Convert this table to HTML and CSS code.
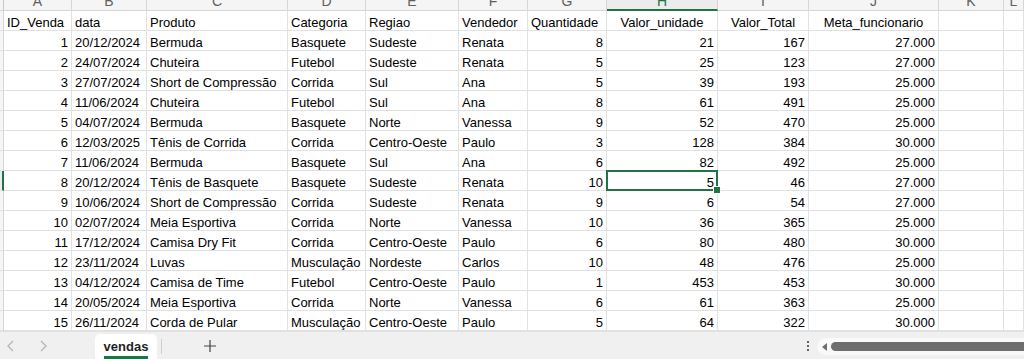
FILE: index.html
```html
<!DOCTYPE html>
<html>
<head>
<meta charset="utf-8">
<link rel="stylesheet" href="styles.css">
</head>
<body>
<div class="app">
  <div class="sheet">
    <div class="hd corner"></div>
    <div class="hd"><span>A</span></div>
    <div class="hd"><span>B</span></div>
    <div class="hd"><span>C</span></div>
    <div class="hd"><span>D</span></div>
    <div class="hd"><span>E</span></div>
    <div class="hd"><span>F</span></div>
    <div class="hd"><span>G</span></div>
    <div class="hd hd-sel"><span>H</span></div>
    <div class="hd"><span>I</span></div>
    <div class="hd"><span>J</span></div>
    <div class="hd"><span>K</span></div>
    <div class="hd"><span>L</span></div>

    <div class="rh"></div>
    <div class="c">ID_Venda</div><div class="c">data</div><div class="c">Produto</div><div class="c">Categoria</div><div class="c">Regiao</div><div class="c">Vendedor</div><div class="c">Quantidade</div><div class="c ctr">Valor_unidade</div><div class="c ctr">Valor_Total</div><div class="c ctr">Meta_funcionario</div><div class="c"></div><div class="c"></div>

    <div class="rh"></div>
    <div class="c n">1</div><div class="c">20/12/2024</div><div class="c">Bermuda</div><div class="c">Basquete</div><div class="c">Sudeste</div><div class="c">Renata</div><div class="c n">8</div><div class="c n">21</div><div class="c n">167</div><div class="c n">27.000</div><div class="c"></div><div class="c"></div>

    <div class="rh"></div>
    <div class="c n">2</div><div class="c">24/07/2024</div><div class="c">Chuteira</div><div class="c">Futebol</div><div class="c">Sudeste</div><div class="c">Renata</div><div class="c n">5</div><div class="c n">25</div><div class="c n">123</div><div class="c n">27.000</div><div class="c"></div><div class="c"></div>

    <div class="rh"></div>
    <div class="c n">3</div><div class="c">27/07/2024</div><div class="c">Short de Compressão</div><div class="c">Corrida</div><div class="c">Sul</div><div class="c">Ana</div><div class="c n">5</div><div class="c n">39</div><div class="c n">193</div><div class="c n">25.000</div><div class="c"></div><div class="c"></div>

    <div class="rh"></div>
    <div class="c n">4</div><div class="c">11/06/2024</div><div class="c">Chuteira</div><div class="c">Futebol</div><div class="c">Sul</div><div class="c">Ana</div><div class="c n">8</div><div class="c n">61</div><div class="c n">491</div><div class="c n">25.000</div><div class="c"></div><div class="c"></div>

    <div class="rh"></div>
    <div class="c n">5</div><div class="c">04/07/2024</div><div class="c">Bermuda</div><div class="c">Basquete</div><div class="c">Norte</div><div class="c">Vanessa</div><div class="c n">9</div><div class="c n">52</div><div class="c n">470</div><div class="c n">25.000</div><div class="c"></div><div class="c"></div>

    <div class="rh"></div>
    <div class="c n">6</div><div class="c">12/03/2025</div><div class="c">Tênis de Corrida</div><div class="c">Corrida</div><div class="c">Centro-Oeste</div><div class="c">Paulo</div><div class="c n">3</div><div class="c n">128</div><div class="c n">384</div><div class="c n">30.000</div><div class="c"></div><div class="c"></div>

    <div class="rh"></div>
    <div class="c n">7</div><div class="c">11/06/2024</div><div class="c">Bermuda</div><div class="c">Basquete</div><div class="c">Sul</div><div class="c">Ana</div><div class="c n">6</div><div class="c n">82</div><div class="c n">492</div><div class="c n">25.000</div><div class="c"></div><div class="c"></div>

    <div class="rh rh-sel"></div>
    <div class="c n">8</div><div class="c">20/12/2024</div><div class="c">Tênis de Basquete</div><div class="c">Basquete</div><div class="c">Sudeste</div><div class="c">Renata</div><div class="c n">10</div><div class="c n sel">5</div><div class="c n">46</div><div class="c n">27.000</div><div class="c"></div><div class="c"></div>

    <div class="rh"></div>
    <div class="c n">9</div><div class="c">10/06/2024</div><div class="c">Short de Compressão</div><div class="c">Corrida</div><div class="c">Sudeste</div><div class="c">Renata</div><div class="c n">9</div><div class="c n">6</div><div class="c n">54</div><div class="c n">27.000</div><div class="c"></div><div class="c"></div>

    <div class="rh"></div>
    <div class="c n">10</div><div class="c">02/07/2024</div><div class="c">Meia Esportiva</div><div class="c">Corrida</div><div class="c">Norte</div><div class="c">Vanessa</div><div class="c n">10</div><div class="c n">36</div><div class="c n">365</div><div class="c n">25.000</div><div class="c"></div><div class="c"></div>

    <div class="rh"></div>
    <div class="c n">11</div><div class="c">17/12/2024</div><div class="c">Camisa Dry Fit</div><div class="c">Corrida</div><div class="c">Centro-Oeste</div><div class="c">Paulo</div><div class="c n">6</div><div class="c n">80</div><div class="c n">480</div><div class="c n">30.000</div><div class="c"></div><div class="c"></div>

    <div class="rh"></div>
    <div class="c n">12</div><div class="c">23/11/2024</div><div class="c">Luvas</div><div class="c">Musculação</div><div class="c">Nordeste</div><div class="c">Carlos</div><div class="c n">10</div><div class="c n">48</div><div class="c n">476</div><div class="c n">25.000</div><div class="c"></div><div class="c"></div>

    <div class="rh"></div>
    <div class="c n">13</div><div class="c">04/12/2024</div><div class="c">Camisa de Time</div><div class="c">Futebol</div><div class="c">Centro-Oeste</div><div class="c">Paulo</div><div class="c n">1</div><div class="c n">453</div><div class="c n">453</div><div class="c n">30.000</div><div class="c"></div><div class="c"></div>

    <div class="rh"></div>
    <div class="c n">14</div><div class="c">20/05/2024</div><div class="c">Meia Esportiva</div><div class="c">Corrida</div><div class="c">Norte</div><div class="c">Vanessa</div><div class="c n">6</div><div class="c n">61</div><div class="c n">363</div><div class="c n">25.000</div><div class="c"></div><div class="c"></div>

    <div class="rh"></div>
    <div class="c n">15</div><div class="c">26/11/2024</div><div class="c">Corda de Pular</div><div class="c">Musculação</div><div class="c">Centro-Oeste</div><div class="c">Paulo</div><div class="c n">5</div><div class="c n">64</div><div class="c n">322</div><div class="c n">30.000</div><div class="c"></div><div class="c"></div>
  </div>

  <div class="tabbar">
    <div class="nav">
      <svg class="arr" width="10" height="14" viewBox="0 0 10 14"><path d="M7 2 L2 7 L7 12" fill="none" stroke="#b5b5b5" stroke-width="1.3"/></svg>
      <svg class="arr" width="10" height="14" viewBox="0 0 10 14"><path d="M3 2 L8 7 L3 12" fill="none" stroke="#b5b5b5" stroke-width="1.3"/></svg>
    </div>
    <div class="tab"><span class="tab-label">vendas</span></div>
    <div class="sep"></div>
    <div class="add">
      <svg width="14" height="14" viewBox="0 0 14 14"><path d="M7 1 V13 M1 7 H13" stroke="#444" stroke-width="1.2"/></svg>
    </div>
    <div class="spacer"></div>
    <div class="more">
      <svg width="4" height="12" viewBox="0 0 4 12"><circle cx="2" cy="2" r="1.1" fill="#444"/><circle cx="2" cy="6" r="1.1" fill="#444"/><circle cx="2" cy="10" r="1.1" fill="#444"/></svg>
    </div>
    <div class="hscroll">
      <svg class="tri" width="6" height="8" viewBox="0 0 6 8"><path d="M5 0 V8 L0 4 Z" fill="#6e6e6e"/></svg>
      <div class="thumb"></div>
    </div>
  </div>
</div>
</body>
</html>
```

FILE: styles.css
```css
* { box-sizing: border-box; }
html, body { margin: 0; padding: 0; background: #fff; }
body { width: 1024px; height: 359px; overflow: hidden; }

.app {
  display: flex;
  flex-direction: column;
  height: 359px;
  font-family: "Liberation Sans", Arial, sans-serif;
  font-size: 13px;
  color: #000;
}

.sheet {
  display: grid;
  grid-template-columns: 4px 68px 75px 141px 78px 93px 69px 79px 111px 91px 130px 65px 1fr;
  grid-auto-rows: 20px;
  grid-template-rows: 11px;
  flex: 0 0 auto;
  height: 331px;
  overflow: hidden;
}

.hd {
  background: #f5f5f5;
  border-right: 1px solid #d6d6d6;
  border-bottom: 1px solid #d6d6d6;
  overflow: hidden;
  display: flex;
  justify-content: center;
}
.hd span {
  display: block;
  line-height: 20px;
  margin-top: -9px;
  font-size: 14px;
  color: #606060;
}
.hd.corner { border-right: 1px solid #c8c8c8; }
.hd-sel {
  background: #ececec;
  border-bottom: 2px solid #217346;
}
.hd-sel span { color: #217346; }

.rh {
  background: #f5f5f5;
  border-right: 1px solid #d6d6d6;
  border-bottom: 1px solid #e1e1e1;
}
.rh-sel { border-right: 2px solid #217346; background: #ececec; }

.c {
  border-right: 1px solid #e1e1e1;
  border-bottom: 1px solid #e1e1e1;
  padding: 0 3px;
  white-space: nowrap;
  overflow: hidden;
  display: flex;
  align-items: flex-end;
  line-height: 14px;
}
.c.n { justify-content: flex-end; }
.c.ctr { justify-content: center; }

.sel { position: relative; overflow: visible; }
.sel::after {
  content: "";
  position: absolute;
  left: -1px; top: -1px; right: -1px; bottom: -1px;
  border: 2px solid #217346;
  pointer-events: none;
}
.sel::before {
  content: "";
  position: absolute;
  right: -4px; bottom: -4px;
  width: 6px; height: 6px;
  background: #217346;
  border: 1px solid #fff;
  z-index: 2;
}

.tabbar {
  flex: 1 1 auto;
  display: flex;
  align-items: stretch;
  background: #f0f0f0;
  border-top: 1px solid #e1e1e1;
}
.nav {
  display: flex;
  align-items: center;
  gap: 22px;
  padding-left: 6px;
  width: 95px;
}
.arr { display: block; }
.tab {
  margin-top: 2px;
  width: 62px;
  background: #fff;
  border-radius: 5px 5px 0 0;
  display: flex;
  justify-content: center;
  align-items: center;
}
.tab-label {
  font-weight: bold;
  font-size: 13px;
  color: #1f1f1f;
  padding: 2px 0 2px;
  border-bottom: 3px solid #217346;
  margin-top: 3px;
}
.sep {
  width: 1px;
  background: #cfcfcf;
  margin: 7px 0 5px 4px;
}
.add {
  width: 96px;
  display: flex;
  align-items: center;
  justify-content: center;
}
.spacer { flex: 1 1 auto; }
.more {
  width: 16px;
  display: flex;
  align-items: center;
  justify-content: center;
  margin-right: 1px;
}
.hscroll {
  width: 207px;
  margin: 6px 0 4px 0;
  background: #f9f9f9;
  border-radius: 9px 0 0 9px;
  display: flex;
  align-items: center;
  padding-left: 5px;
  gap: 3px;
}
.tri { display: block; }
.thumb {
  flex: 1 1 auto;
  height: 9px;
  background: #6e6e6e;
  border-radius: 5px 0 0 5px;
}
```
